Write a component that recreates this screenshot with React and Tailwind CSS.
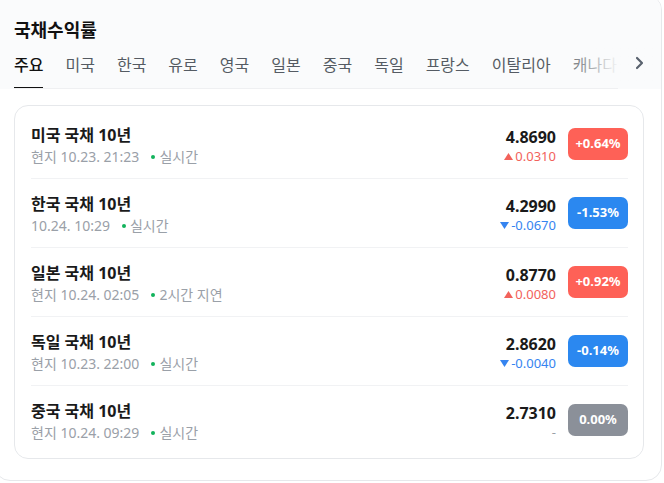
import React from 'react'

const TABS = ['주요', '미국', '한국', '유로', '영국', '일본', '중국', '독일', '프랑스', '이탈리아', '캐나다']

const ROWS = [
  { name: '미국 국채 10년', time: '현지 10.23. 21:23', status: '실시간', value: '4.8690', change: '0.0310', pct: '+0.64%', dir: 'up' },
  { name: '한국 국채 10년', time: '10.24. 10:29', status: '실시간', value: '4.2990', change: '-0.0670', pct: '-1.53%', dir: 'down' },
  { name: '일본 국채 10년', time: '현지 10.24. 02:05', status: '2시간 지연', value: '0.8770', change: '0.0080', pct: '+0.92%', dir: 'up' },
  { name: '독일 국채 10년', time: '현지 10.23. 22:00', status: '실시간', value: '2.8620', change: '-0.0040', pct: '-0.14%', dir: 'down' },
  { name: '중국 국채 10년', time: '현지 10.24. 09:29', status: '실시간', value: '2.7310', change: '-', pct: '0.00%', dir: 'flat' },
]

const font = { fontFamily: '"Noto Sans", "Noto Sans CJK KR", sans-serif' }

function Change({ dir, change }) {
  if (dir === 'up') {
    return (
      <div className="flex items-center justify-end gap-[2px] text-[13px] leading-[17px] text-[#f2625b]">
        <svg width="9" height="7" viewBox="0 0 9 7"><path d="M4.5 0L9 7H0z" fill="currentColor" /></svg>
        <span>{change}</span>
      </div>
    )
  }
  if (dir === 'down') {
    return (
      <div className="flex items-center justify-end gap-[2px] text-[13px] leading-[17px] text-[#3584f0]">
        <svg width="9" height="7" viewBox="0 0 9 7"><path d="M0 0H9L4.5 7z" fill="currentColor" /></svg>
        <span>{change}</span>
      </div>
    )
  }
  return <div className="text-right text-[13px] leading-[17px] text-[#9aa0a8]">{change}</div>
}

function Badge({ dir, pct }) {
  const bg = dir === 'up' ? 'bg-[#fe6157]' : dir === 'down' ? 'bg-[#2b88f0]' : 'bg-[#8b9099]'
  return (
    <div className={`${bg} w-[60px] h-[32px] rounded-[7px] flex items-center justify-center text-white text-[13px] font-bold`}>
      {pct}
    </div>
  )
}

function Row({ r, last }) {
  return (
    <div className={`flex items-center ${last ? 'h-[68px]' : 'h-[69px] border-b border-[#f1f2f4]'}`}>
      <div className="flex-1 mt-[1px]">
        <div className="text-[16px] leading-[24px] font-bold text-[#1a1a1a]">{r.name}</div>
        <div className="flex items-center text-[14px] leading-[20px] text-[#9aa0a8]">
          <span>{r.time}</span>
          <span className="ml-[12px] mr-[4px] w-[4px] h-[4px] rounded-full bg-[#12b35c]" />
          <span>{r.status}</span>
        </div>
      </div>
      <div className="flex flex-col items-end mr-[12px] mt-[4px]">
        <div className="text-[16px] leading-[21px] font-bold text-[#1a1a1a]">{r.value}</div>
        <Change dir={r.dir} change={r.change} />
      </div>
      <Badge dir={r.dir} pct={r.pct} />
    </div>
  )
}

export default function App() {
  return (
    <div className="w-[664px] h-[483px] overflow-hidden bg-white" style={font}>
      <div className="-mt-[6px] -ml-[6px] w-[668px] h-[487px] rounded-[16px] border border-[#e6e8eb] bg-white overflow-hidden">
        <div className="bg-[#fafbfc] pl-[19px] pt-[22px]">
          <div className="text-[18px] leading-[26px] font-bold text-[#111]">국채수익률</div>
          <div className="relative mt-[10px]">
            <div className="flex gap-[22px] border-b border-[#eff0f2] w-[604px] whitespace-nowrap overflow-hidden">
              {TABS.map((t, i) => (
                <div
                  key={t}
                  className={`relative shrink-0 pb-[11px] text-[16px] leading-[24px] ${i === 0 ? 'text-[#111] font-medium' : 'text-[#555b63]'}`}
                >
                  {t}
                  {i === 0 && <div className="absolute left-0 right-0 -bottom-[1px] h-[2px] bg-[#111]" />}
                </div>
              ))}
            </div>
            <div className="absolute right-0 top-[-6px] bottom-[4px] w-[88px] flex items-center justify-end pr-[17px] bg-gradient-to-r from-[#fafbfc]/20 via-[#fafbfc]/95 to-[#fafbfc]">
              <svg width="9" height="14" viewBox="0 0 9 14" className="mb-[6px]">
                <path d="M2 2l5 5-5 5" fill="none" stroke="#59626e" strokeWidth="2.2" strokeLinecap="round" strokeLinejoin="round" />
              </svg>
            </div>
          </div>
        </div>
        <div className="pl-[19px] pr-[17px] pt-[16px]">
          <div className="rounded-[14px] border border-[#e6e8eb] bg-white pl-[16px] pr-[15px] py-[4px]">
            {ROWS.map((r, i) => (
              <Row key={r.name} r={r} last={i === ROWS.length - 1} />
            ))}
          </div>
        </div>
      </div>
    </div>
  )
}
